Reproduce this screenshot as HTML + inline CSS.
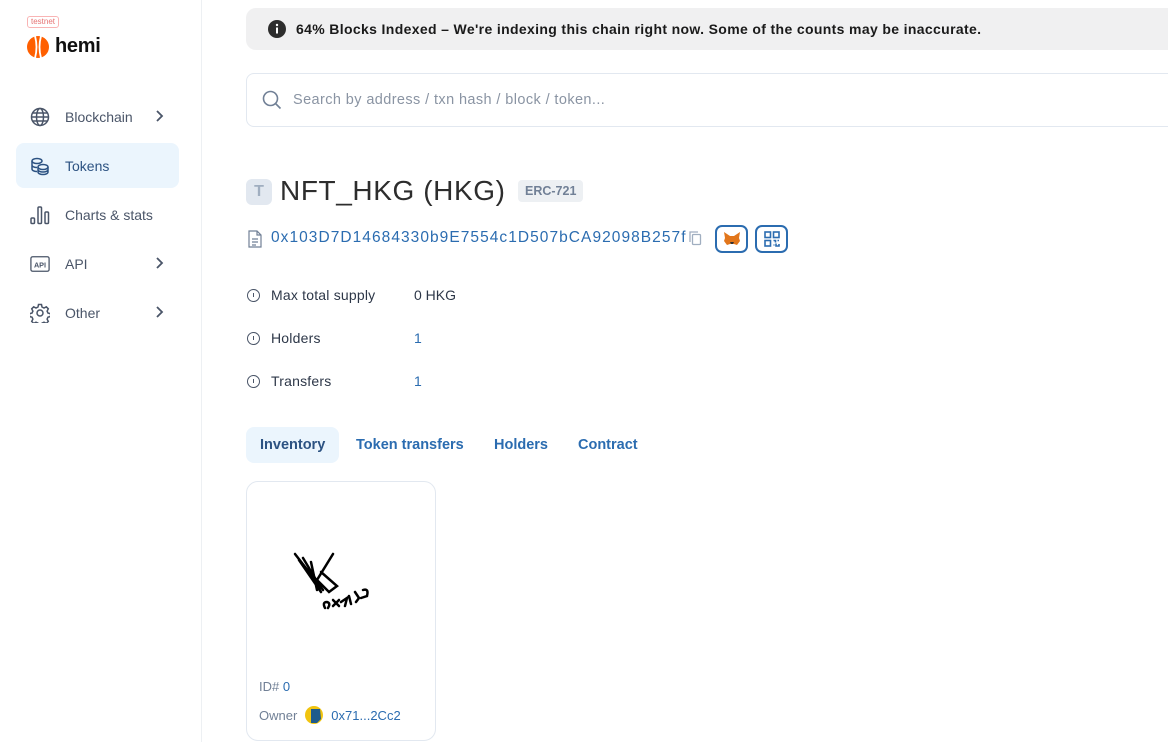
<!DOCTYPE html>
<html><head><meta charset="utf-8"><style>
*{box-sizing:border-box;margin:0;padding:0}
body{width:1168px;height:742px;overflow:hidden;background:#fff;font-family:"Liberation Sans",sans-serif;color:#1a202c;position:relative}
.side{position:absolute;left:0;top:0;width:202px;height:742px;border-right:1px solid #edf0f3}
.abs{position:absolute}
.nav{position:absolute;left:16px;width:163px;height:45px;border-radius:8px;display:flex;align-items:center;font-size:14px;color:#4a5568}
.nav .ic{width:20px;height:20px;margin-left:14px;margin-right:15px;display:flex;align-items:center;justify-content:center}
.nav .ch{position:absolute;right:12px;top:14px}
.lbl{position:absolute;left:247px;font-size:14px;color:#2d3748;display:flex;align-items:center;letter-spacing:0.2px}
.lbl i{display:inline-block;width:13px;height:13px;border:1.3px solid #4a5568;border-radius:50%;margin-right:11px;position:relative;font-style:normal}
.lbl i:after{content:"";position:absolute;left:4.5px;top:3.5px;width:1.5px;height:4px;background:#4a5568}
.val{position:absolute;left:414px;font-size:14px}
.tab{position:absolute;top:427px;height:36px;font-size:14.5px;font-weight:bold;color:#2b6cb0;display:flex;align-items:center;padding:0 14px;border-radius:8px}
</style></head><body>
<div class="side">
  <div class="abs" style="left:27px;top:16px;border:1px solid #f9b4b4;border-radius:3px;font-size:8px;color:#e57373;padding:0 3px;line-height:10px">testnet</div>
  <svg class="abs" style="left:27px;top:36px" width="22" height="22" viewBox="0 0 22 22"><circle cx="11" cy="11" r="11" fill="#ff5f00"/><path d="M8 0 Q11 11 8 22 M14 0 Q11 11 14 22" stroke="#fff" stroke-width="1.8" fill="none"/></svg>
  <div class="abs" style="left:55px;top:35px;font-size:20px;font-weight:bold;color:#111;letter-spacing:-0.3px">hemi</div>
  <div class="nav" style="top:94px"><span class="ic"><svg width="20" height="20" viewBox="0 0 20 20" fill="none" stroke="#4a5568" stroke-width="1.5"><circle cx="10" cy="10" r="8.5"/><ellipse cx="10" cy="10" rx="3.5" ry="8.5"/><path d="M1.5 10h17M3 6h14M3 14h14"/></svg></span>Blockchain<svg class="ch" width="16" height="16" viewBox="0 0 16 16"><path d="M6 3l5 5-5 5" stroke="#4a5568" stroke-width="1.8" fill="none"/></svg></div>
  <div class="nav" style="top:143px;background:#ebf5fd;color:#2c5282"><span class="ic"><svg width="20" height="20" viewBox="0 0 20 20" fill="none" stroke="#2c5282" stroke-width="1.5"><ellipse cx="7" cy="5" rx="5" ry="2.5"/><path d="M2 5v8c0 1.4 2.2 2.5 5 2.5M2 9c0 1.4 2.2 2.5 5 2.5"/><ellipse cx="13" cy="11" rx="5" ry="2.5"/><path d="M8 11v5c0 1.4 2.2 2.5 5 2.5s5-1.1 5-2.5v-5M8 13.5c0 1.4 2.2 2.5 5 2.5s5-1.1 5-2.5"/></svg></span>Tokens</div>
  <div class="nav" style="top:192px"><span class="ic"><svg width="20" height="20" viewBox="0 0 20 20" fill="none" stroke="#4a5568" stroke-width="1.5"><rect x="1" y="13" width="3.5" height="5.5" rx="1"/><rect x="8" y="2" width="3.5" height="16.5" rx="1"/><rect x="15" y="7" width="3.5" height="11.5" rx="1"/></svg></span>Charts &amp; stats</div>
  <div class="nav" style="top:241px"><span class="ic"><svg width="22" height="20" viewBox="0 0 22 20"><rect x="1" y="2" width="20" height="16" rx="2" fill="none" stroke="#4a5568" stroke-width="1.4"/><text x="11" y="14" font-size="8" font-weight="bold" text-anchor="middle" fill="#4a5568" font-family="Liberation Sans">API</text></svg></span>API<svg class="ch" width="16" height="16" viewBox="0 0 16 16"><path d="M6 3l5 5-5 5" stroke="#4a5568" stroke-width="1.8" fill="none"/></svg></div>
  <div class="nav" style="top:290px"><span class="ic"><svg width="20" height="20" viewBox="0 0 20 20" fill="none" stroke="#4a5568" stroke-width="1.5"><circle cx="10" cy="10" r="3"/><path d="M8.5 1.5h3l.5 2.5 2 1 2.3-1.2 2 2-1.2 2.3.9 2 2.5.5v3l-2.5.5-.9 2 1.2 2.3-2 2-2.3-1.2-2 .9-.5 2.5h-3l-.5-2.5-2-.9-2.3 1.2-2-2 1.2-2.3-.9-2-2.5-.5v-3l2.5-.5.9-2-1.2-2.3 2-2 2.3 1.2 2-1z"/></svg></span>Other<svg class="ch" width="16" height="16" viewBox="0 0 16 16"><path d="M6 3l5 5-5 5" stroke="#4a5568" stroke-width="1.8" fill="none"/></svg></div>
</div>

<div class="abs" style="left:246px;top:8px;width:940px;height:42px;background:#f0f0f1;border-radius:10px;display:flex;align-items:center;padding-left:22px;font-size:14px;font-weight:bold;color:#1a1a1a;letter-spacing:0.35px">
  <svg width="18" height="18" viewBox="0 0 18 18" style="margin-right:10px"><circle cx="9" cy="9" r="9" fill="#2d2d2d"/><rect x="8" y="7.5" width="2" height="6" fill="#fff"/><circle cx="9" cy="5" r="1.2" fill="#fff"/></svg>
  64% Blocks Indexed – We're indexing this chain right now. Some of the counts may be inaccurate.
</div>

<div class="abs" style="left:246px;top:73px;width:940px;height:54px;border:1px solid #e2e8f0;border-radius:8px;display:flex;align-items:center;padding-left:15px;font-size:14.5px;color:#8a94a3;letter-spacing:0.4px">
  <svg width="20" height="20" viewBox="0 0 20 20" style="margin-right:11px" fill="none" stroke="#718096" stroke-width="1.6"><circle cx="8.5" cy="8.5" r="7"/><path d="M13.5 13.5l5 5"/></svg>
  Search by address / txn hash / block / token...
</div>

<div class="abs" style="left:246px;top:179px;width:26px;height:26px;background:#e2e8f0;border-radius:6px;color:#a0aec0;font-size:16px;font-weight:bold;text-align:center;line-height:26px">T</div>
<div class="abs" style="left:280px;top:175px;font-size:28px;color:#2d2d2d;letter-spacing:0.6px">NFT_HKG (HKG)</div>
<div class="abs" style="left:518px;top:180px;height:22px;padding:0 7px;background:#edf0f3;border-radius:4px;font-size:12.5px;font-weight:bold;color:#718096;line-height:22px">ERC-721</div>

<svg class="abs" style="left:248px;top:230px" width="14" height="18" viewBox="0 0 14 18" fill="none" stroke="#718096" stroke-width="1.2"><path d="M1 1h8l4 4v12H1z M9 1v4h4 M4 9h6M4 12h6M4 15h4"/></svg>
<div class="abs" style="left:271px;top:229px;font-size:15.5px;color:#2b6cb0;letter-spacing:1.05px">0x103D7D14684330b9E7554c1D507bCA92098B257f</div>
<svg class="abs" style="left:689px;top:231px" width="13" height="15" viewBox="0 0 13 15" fill="none" stroke="#a0aec0" stroke-width="1.3"><rect x="3.5" y="3.5" width="8" height="10" rx="1"/><path d="M1 11V1h8"/></svg>
<div class="abs" style="left:715px;top:225px;width:33px;height:28px;border:2px solid #2b6cb0;border-radius:7px;display:flex;align-items:center;justify-content:center"><svg width="18" height="16" viewBox="0 0 18 16"><path d="M1 1l6 4h4l6-4-1 6 1 3-3 4-3-1H7l-3 1-3-4 1-3z" fill="#e2761b"/><path d="M7 11h4l-1 2H8z" fill="#333"/></svg></div>
<div class="abs" style="left:755px;top:225px;width:33px;height:28px;border:2px solid #2b6cb0;border-radius:7px;display:flex;align-items:center;justify-content:center"><svg width="16" height="16" viewBox="0 0 16 16" fill="none" stroke="#2b6cb0" stroke-width="1.6"><rect x="1" y="1" width="5.5" height="5.5"/><rect x="9.5" y="1" width="5.5" height="5.5"/><rect x="1" y="9.5" width="5.5" height="5.5"/><path d="M9.5 9.5h2v2M13.5 9.5h1.5M9.5 14h1M12 12.5v2.5h3v-2"/></svg></div>

<div class="lbl" style="top:287px"><i></i>Max total supply</div><div class="val" style="top:287px;color:#2d3748">0 HKG</div>
<div class="lbl" style="top:330px"><i></i>Holders</div><div class="val" style="top:330px;color:#2b6cb0">1</div>
<div class="lbl" style="top:373px"><i></i>Transfers</div><div class="val" style="top:373px;color:#2b6cb0">1</div>

<div class="tab" style="left:246px;background:#ebf5fd;color:#2c5282">Inventory</div>
<div class="tab" style="left:342px">Token transfers</div>
<div class="tab" style="left:480px">Holders</div>
<div class="tab" style="left:564px">Contract</div>

<div class="abs" style="left:246px;top:481px;width:190px;height:260px;border:1px solid #e2e8f0;border-radius:12px">
  <svg class="abs" style="left:44px;top:68px" width="100" height="70" viewBox="0 0 100 70" fill="none" stroke="#000" stroke-width="2.5" stroke-linecap="round"><path d="M4 4 L32 40 M8 10 L30 42 M12 8 L30 38 M20 12 L26 40 M42 4 L26 30 L38 42 L46 36 L30 22"/><path d="M34 58 q-3 -6 2 -6 q4 1 1 6 M42 56 l6 -6 M42 50 l6 6 M50 52 l6 -4 l-2 8 M58 46 l2 8 M64 42 l4 6 -3 4 M72 40 q6 -2 4 6 l-6 2"/></svg>
  <div class="abs" style="left:12px;top:197px;font-size:13px;color:#718096">ID# <span style="color:#2b6cb0">0</span></div>
  <div class="abs" style="left:12px;top:224px;font-size:13px;color:#718096;display:flex;align-items:center">Owner <svg width="18" height="18" viewBox="0 0 18 18" style="margin:0 8px 0 8px"><circle cx="9" cy="9" r="9" fill="#f1c40f"/><path d="M6 3h9l1 10-4 4H6z" fill="#1f5b8c"/></svg><span style="color:#2b6cb0">0x71...2Cc2</span></div>
</div>
</body></html>
